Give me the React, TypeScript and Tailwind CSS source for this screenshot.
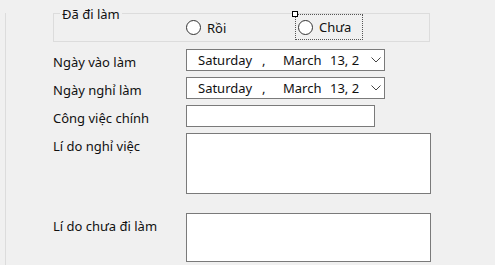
import React from 'react'

function Radio({ label }: { label: string }) {
    return (
        <div className='flex items-center'>
            <div className='w-[15px] h-[15px] rounded-full border border-[#333333] bg-white'></div>
            <span className='ml-[6px] leading-[16px]'>{label}</span>
        </div>
    )
}

function DatePicker() {
    return (
        <div className='flex items-center w-[199px] h-[22px] border border-[#7a7a7a] bg-white pl-[11px] pr-[3px] leading-[16px]'>
            <span className='w-[64px]'>Saturday</span>
            <span className='w-[21px]'>,</span>
            <span className='w-[47px]'>March</span>
            <span>13, 2</span>
            <svg className='ml-auto' width='10' height='6' viewBox='0 0 10 6'>
                <path d='M0.5 0.5 L5 5 L9.5 0.5' fill='none' stroke='#444' strokeWidth='1' />
            </svg>
        </div>
    )
}

function Row({ label, mt, children }: { label: string; mt: string; children: React.ReactNode }) {
    return (
        <div className={'flex ' + mt}>
            <div className='w-[133px] mt-[5px] leading-[16px]'>{label}</div>
            {children}
        </div>
    )
}

export default function App() {
    return (
        <div className="w-[495px] h-[265px] bg-[#f0f0f0] overflow-hidden font-['Noto_Sans',sans-serif] text-[13px] text-[#111111]">
            <div className='ml-[5px] h-[264px] border-l border-b border-[#dcdcdc] pl-[47px]'>
                <div className='relative mt-[13px] w-[377px] h-[29px] border border-[#dcdcdc] flex items-center pl-[132px]'>
                    <div className='absolute left-[6px] top-[-8px] bg-[#f0f0f0] px-[2px] leading-[16px]'>Đã đi làm</div>
                    <div className='w-[109px]'>
                        <Radio label='Rồi' />
                    </div>
                    <div className='relative -mt-[1px] w-[68px] h-[26px] border border-dotted border-[#555555] pl-[2px] flex items-center'>
                        <div className='absolute left-[-4px] top-[-4px] w-[6px] h-[6px] border border-black bg-white'></div>
                        <Radio label='Chưa' />
                    </div>
                </div>
                <Row label='Ngày vào làm' mt='mt-[7px]'>
                    <DatePicker />
                </Row>
                <Row label='Ngày nghỉ làm' mt='mt-[6px]'>
                    <DatePicker />
                </Row>
                <Row label='Công việc chính' mt='mt-[6px]'>
                    <div className='w-[189px] h-[22px] border border-[#7a7a7a] bg-white'></div>
                </Row>
                <Row label='Lí do nghỉ việc' mt='mt-[6px]'>
                    <div className='w-[245px] h-[61px] border border-[#7a7a7a] bg-white'></div>
                </Row>
                <Row label='Lí do chưa đi làm' mt='mt-[19px]'>
                    <div className='w-[245px] h-[49px] border border-[#7a7a7a] bg-white'></div>
                </Row>
            </div>
        </div>
    )
}
